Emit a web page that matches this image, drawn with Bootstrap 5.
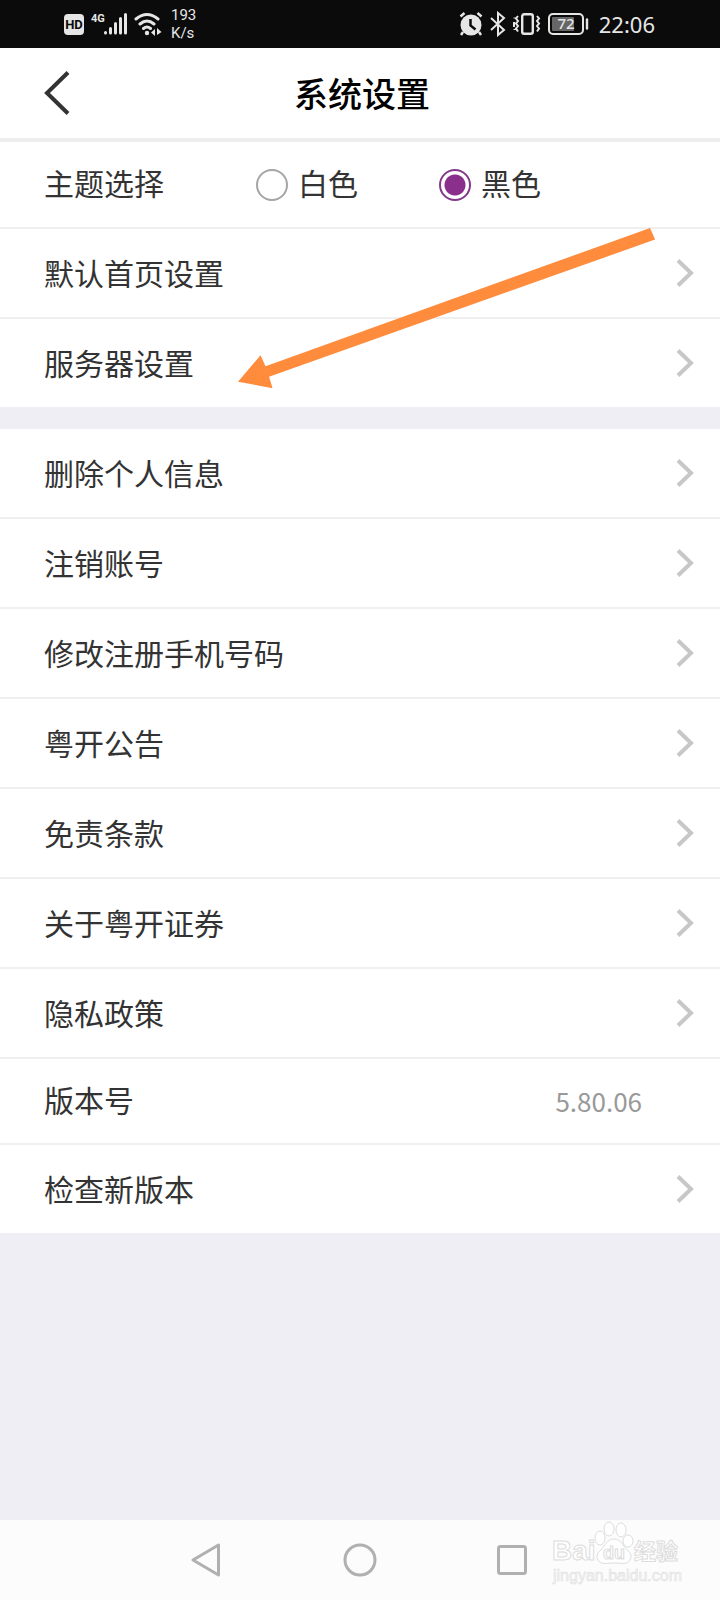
<!DOCTYPE html>
<html lang="zh-CN">
<head>
<meta charset="utf-8">
<meta name="viewport" content="width=device-width, initial-scale=1">
<title>系统设置</title>
<link href="https://cdn.jsdelivr.net/npm/bootstrap@5.3.0/dist/css/bootstrap.min.css" rel="stylesheet">
<style>
  body { font-family: "Noto Sans CJK SC", sans-serif; background: #efeef4; color: #333; }
  .status-bar { height: 48px; background: #0b0b0b; color: #e6e6e6; padding: 0 65px 0 63px; }
  .status-bar svg { display: block; flex: none; }
  .net-speed { font: 15px/18px Roboto, sans-serif; margin-left: 9px; }
  .clock { font: 22px/30px "Noto Sans", sans-serif; margin-left: 10px; }
  .title-bar { height: 94px; border-bottom: 4px solid #eee; }
  .title-bar h1 { font: 500 34px/48px "AR PL UKai CN", KaiTi, "Noto Sans CJK SC", serif; color: #000; padding-left: 4px; }
  .back-btn { left: 33px; width: 48px; height: 60px; }
  .setting { min-height: 90px; padding: 0 26px 0 44px; border-bottom: 2px solid #efeff0; font-size: 30px; line-height: 44px; color: #333; }
  .setting:hover { color: #333; background: #fafafa; }
  .setting > span:first-child, .theme-legend, .theme-option label { padding-bottom: 3px; }
  .setting-theme { min-height: 87px; padding-bottom: 2px; }
  .setting-version { min-height: 86px; padding-bottom: 2px; }
  .setting-final { border-bottom: 0; min-height: 88px; }
  .group-gap { margin-top: 22px; }
  .version-no { font-size: 26px; line-height: 36px; color: #999; padding: 2px 52px 0 0; }
  .theme-legend { width: 212px; }
  .theme-option { width: 183px; gap: 10px; }
  .theme-option .form-check-input { width: 32px; height: 32px; margin: 3px 0 0; border: 2px solid #a5a5a5; box-shadow: none; flex: none; }
  .theme-option .form-check-input:checked { border-color: #84398a; background: radial-gradient(circle, #8b2f8c 10px, #fff 11px); }
  .hint-arrow { left: 33%; width: 58%; top: 85px; pointer-events: none; }
  .sys-nav { height: 80px; background: #fcfcfc; }
  .sys-nav .btn { width: 152px; }
  .watermark { right: 34px; bottom: 14px; }
</style>
</head>
<body>
<div class="d-flex flex-column min-vh-100">
  <div class="status-bar d-flex align-items-center justify-content-between">
    <div class="d-flex align-items-center">
      <svg width="66" height="26" viewBox="0 0 66 26">
        <rect x="1" y="3" width="20" height="21" rx="4" fill="#e6e6e6"/>
        <text x="11" y="18" text-anchor="middle" font-family="Roboto" font-weight="700" font-size="13" fill="#0b0b0b">HD</text>
        <text x="28" y="11" font-family="Roboto" font-weight="700" font-size="11" fill="#e6e6e6">4G</text>
        <g stroke="#e6e6e6" stroke-width="3" stroke-linecap="round"><path d="M42.500 21.500v.5M47.500 17.500v4.500M52.500 12.500v9.500M57.500 7.500v14.500M62.500 3.500v18.500"/></g>
      </svg>
      <svg class="ms-1" width="29" height="26" viewBox="0 0 29 26" fill="none" stroke="#e6e6e6" stroke-width="3" stroke-linecap="round">
        <path d="M3 8Q14 -1 25 8M7 13q7-6 14 0M10.500 17.500q3.500-3 7 0"/>
        <circle cx="14" cy="22" r="2.200" fill="#e6e6e6" stroke="none"/>
        <path d="M22 18v7l-4-3.500zM24 17v7l4.500-3z" fill="#e6e6e6" stroke="none"/>
      </svg>
      <div class="net-speed">193<br>K/s</div>
    </div>
    <div class="d-flex align-items-center">
      <svg width="130" height="26" viewBox="0 0 130 26" fill="none" stroke="#e6e6e6">
        <circle cx="12" cy="14" r="10.500" fill="#e6e6e6" stroke="none"/>
        <path d="M1.500 5.500l4-3.500M18.500 2l4 3.500M4 21l-2 3M20 21l2 3" stroke-width="2.500"/>
        <path d="M11.500 8v6.500l5 4" stroke="#0b0b0b" stroke-width="2.500"/>
        <path d="M32 7l13 12-6 5V2l6 5-13 12" stroke-width="2"/>
        <rect x="63.200" y="3.200" width="10.600" height="19.600" rx="2" stroke-width="2.400"/>
        <path d="M59 5l-2 2.500 2 2.500-2 2.500 2 2.500-2 2.500 2 3M55.500 6.500v1M55 11v5M55.500 18v1M78 5l2 2.500-2 2.500 2 2.500-2 2.500 2 2.500-2 3" stroke-width="2"/>
        <rect x="90" y="3" width="34" height="20" rx="4" stroke-width="2"/>
        <rect x="93" y="6" width="22" height="14" rx="1" fill="#666" stroke="none"/>
        <path d="M128 8.500v9" stroke-width="2.400" stroke-linecap="round"/>
        <text x="107" y="18" text-anchor="middle" font-family="Noto Sans" font-weight="500" font-size="15" fill="#e6e6e6" stroke="none">72</text>
      </svg>
      <span class="clock">22:06</span>
    </div>
  </div>

  <header class="title-bar bg-white position-relative d-flex align-items-center justify-content-center">
    <button type="button" class="back-btn btn p-0 border-0 position-absolute" aria-label="返回">
      <svg width="26" height="44" viewBox="0 0 26 44" fill="none" stroke="#333" stroke-width="4"><path d="M24 1.500L3 22l21 20.500"/></svg>
    </button>
    <h1 class="m-0">系统设置</h1>
  </header>

  <main class="flex-grow-1">
    <section class="bg-white position-relative">
      <div class="setting setting-theme d-flex align-items-center" role="radiogroup" aria-labelledby="themeLegend">
        <div class="theme-legend" id="themeLegend">主题选择</div>
        <div class="theme-option d-flex align-items-center">
          <input class="form-check-input" type="radio" name="theme" id="themeWhite">
          <label for="themeWhite">白色</label>
        </div>
        <div class="theme-option d-flex align-items-center">
          <input class="form-check-input" type="radio" name="theme" id="themeBlack" checked>
          <label for="themeBlack">黑色</label>
        </div>
      </div>
      <a href="#" class="setting d-flex align-items-center justify-content-between text-decoration-none"><span>默认首页设置</span><svg width="18" height="28" viewBox="0 0 18 28" fill="none" stroke="#c7c7c9" stroke-width="4"><path d="M2 1.500L15 14 2 26.500"/></svg></a>
      <a href="#" class="setting setting-final d-flex align-items-center justify-content-between text-decoration-none"><span>服务器设置</span><svg width="18" height="28" viewBox="0 0 18 28" fill="none" stroke="#c7c7c9" stroke-width="4"><path d="M2 1.500L15 14 2 26.500"/></svg></a>
      <svg class="hint-arrow position-absolute" viewBox="0 0 417 161" fill="#ff8c3c"><path d="M0 154.500L22.500 128l5 11L411.500 1l5 11.500L31 149.500l3.500 11.500z"/></svg>
    </section>

    <section class="group-gap bg-white">
      <a href="#" class="setting d-flex align-items-center justify-content-between text-decoration-none"><span>删除个人信息</span><svg width="18" height="28" viewBox="0 0 18 28" fill="none" stroke="#c7c7c9" stroke-width="4"><path d="M2 1.500L15 14 2 26.500"/></svg></a>
      <a href="#" class="setting d-flex align-items-center justify-content-between text-decoration-none"><span>注销账号</span><svg width="18" height="28" viewBox="0 0 18 28" fill="none" stroke="#c7c7c9" stroke-width="4"><path d="M2 1.500L15 14 2 26.500"/></svg></a>
      <a href="#" class="setting d-flex align-items-center justify-content-between text-decoration-none"><span>修改注册手机号码</span><svg width="18" height="28" viewBox="0 0 18 28" fill="none" stroke="#c7c7c9" stroke-width="4"><path d="M2 1.500L15 14 2 26.500"/></svg></a>
      <a href="#" class="setting d-flex align-items-center justify-content-between text-decoration-none"><span>粤开公告</span><svg width="18" height="28" viewBox="0 0 18 28" fill="none" stroke="#c7c7c9" stroke-width="4"><path d="M2 1.500L15 14 2 26.500"/></svg></a>
      <a href="#" class="setting d-flex align-items-center justify-content-between text-decoration-none"><span>免责条款</span><svg width="18" height="28" viewBox="0 0 18 28" fill="none" stroke="#c7c7c9" stroke-width="4"><path d="M2 1.500L15 14 2 26.500"/></svg></a>
      <a href="#" class="setting d-flex align-items-center justify-content-between text-decoration-none"><span>关于粤开证券</span><svg width="18" height="28" viewBox="0 0 18 28" fill="none" stroke="#c7c7c9" stroke-width="4"><path d="M2 1.500L15 14 2 26.500"/></svg></a>
      <a href="#" class="setting d-flex align-items-center justify-content-between text-decoration-none"><span>隐私政策</span><svg width="18" height="28" viewBox="0 0 18 28" fill="none" stroke="#c7c7c9" stroke-width="4"><path d="M2 1.500L15 14 2 26.500"/></svg></a>
      <div class="setting setting-version d-flex align-items-center justify-content-between"><span>版本号</span><span class="version-no">5.80.06</span></div>
      <a href="#" class="setting setting-final d-flex align-items-center justify-content-between text-decoration-none"><span>检查新版本</span><svg width="18" height="28" viewBox="0 0 18 28" fill="none" stroke="#c7c7c9" stroke-width="4"><path d="M2 1.500L15 14 2 26.500"/></svg></a>
    </section>
  </main>

  <nav class="sys-nav position-relative d-flex align-items-center justify-content-center" aria-label="系统导航">
    <button type="button" class="btn p-0 border-0" aria-label="后退"><svg width="34" height="36" viewBox="0 0 34 36" fill="none" stroke="#b0b0b0" stroke-width="3" stroke-linejoin="round"><path d="M27.500 3v30L2 18z"/></svg></button>
    <button type="button" class="btn p-0 border-0" aria-label="主页"><svg width="36" height="36" viewBox="0 0 36 36" fill="none" stroke="#b0b0b0" stroke-width="3"><circle cx="18" cy="18" r="15"/></svg></button>
    <button type="button" class="btn p-0 border-0" aria-label="最近任务"><svg width="36" height="36" viewBox="0 0 36 36" fill="none" stroke="#b0b0b0" stroke-width="3"><rect x="4.500" y="4.500" width="27" height="27" rx="2"/></svg></button>
    <svg class="watermark position-absolute" width="136" height="66" viewBox="0 0 136 66" fill="#fff" stroke="#dcdcdc" stroke-width="1">
      <text x="2" y="40" font-family="Liberation Sans" font-weight="700" font-size="28">Bai</text>
      <path d="M64 19c-7 0-9 7-13 11-4 3-5 7-3 10 3 5 8 3 16 3s13 2 16-3c2-3 1-7-3-10-4-4-6-11-13-11z"/>
      <ellipse cx="50" cy="18" rx="5" ry="7"/><ellipse cx="59" cy="9" rx="5" ry="7"/><ellipse cx="71" cy="10" rx="5" ry="7"/><ellipse cx="78" cy="21" rx="5" ry="6"/>
      <text x="53" y="39" font-family="Liberation Sans" font-weight="700" font-size="18">du</text>
      <text x="84" y="39" font-family="Noto Sans CJK SC" font-weight="700" font-size="22">经验</text>
      <text x="3" y="61" font-family="Liberation Sans" font-size="16" fill="#f4f4f4" stroke="#e2e2e2" stroke-width=".6">jingyan.baidu.com</text>
    </svg>
  </nav>
</div>
<script src="https://cdn.jsdelivr.net/npm/bootstrap@5.3.0/dist/js/bootstrap.bundle.min.js"></script>
</body>
</html>
